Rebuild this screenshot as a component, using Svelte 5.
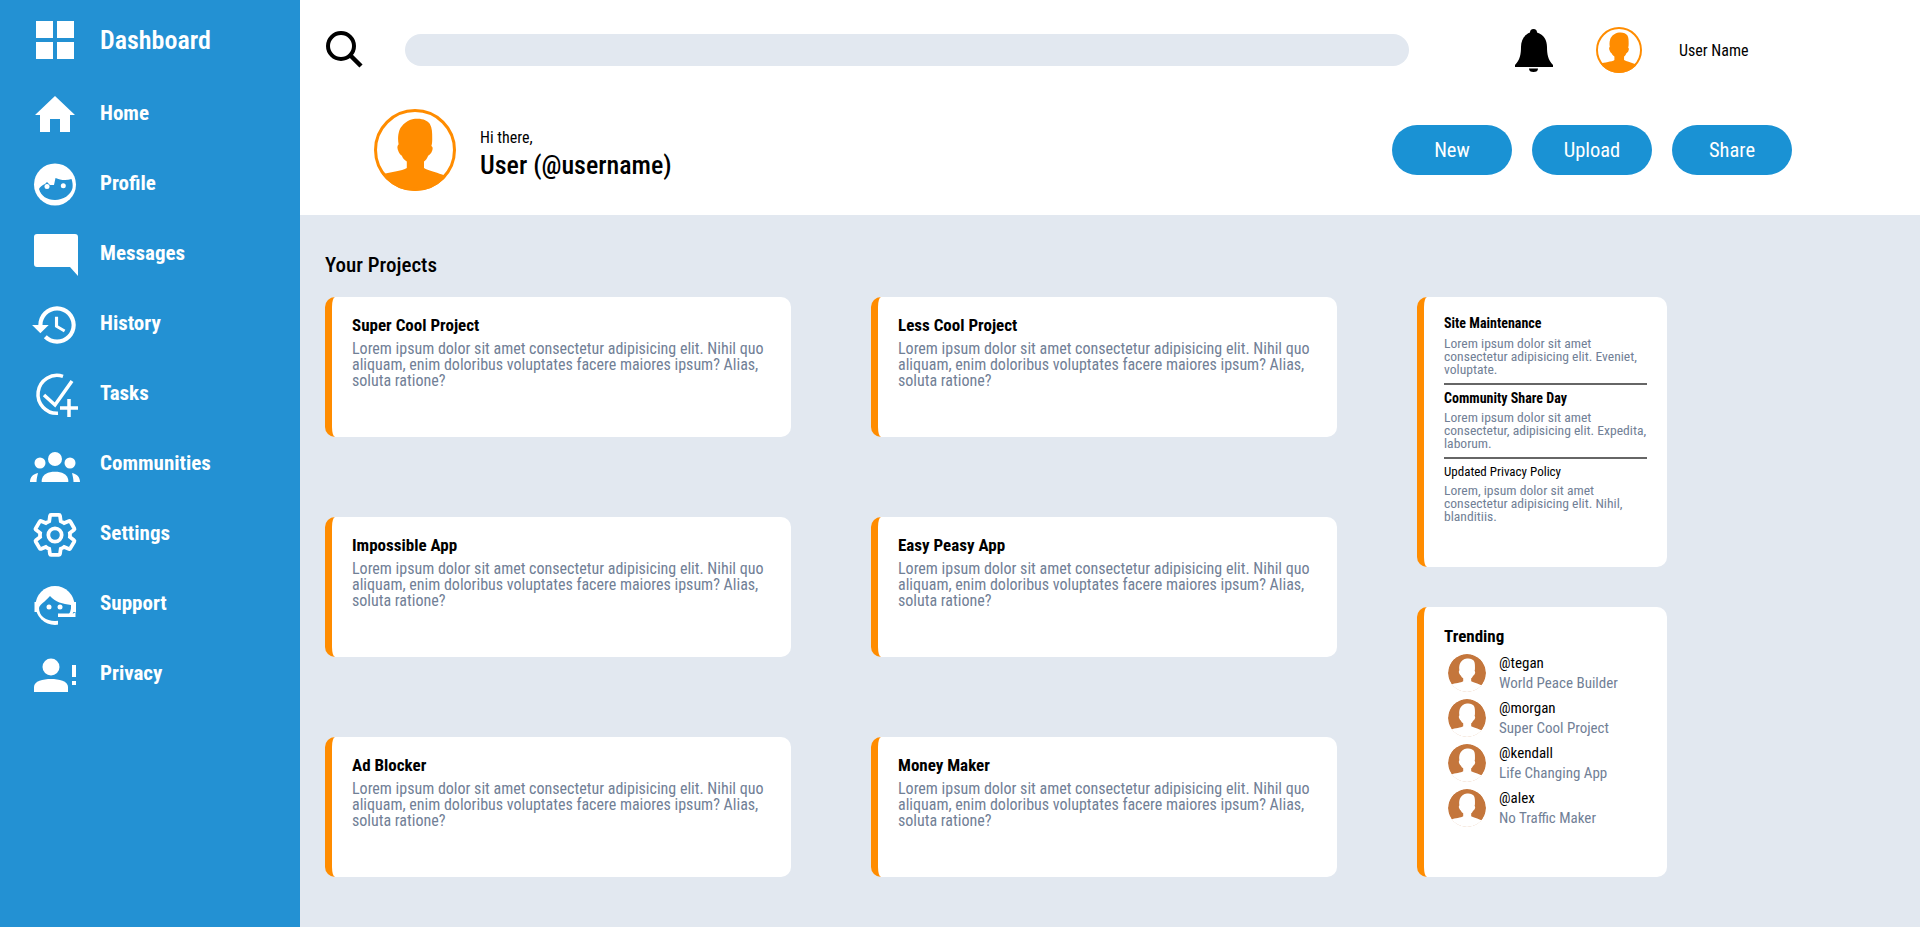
<script>
	const nav = ['Home', 'Profile', 'Messages', 'History', 'Tasks', 'Communities', 'Settings', 'Support', 'Privacy'];
	const lorem = 'Lorem ipsum dolor sit amet consectetur adipisicing elit. Nihil quo aliquam, enim doloribus voluptates facere maiores ipsum? Alias, soluta ratione?';
	const projects = ['Super Cool Project', 'Less Cool Project', 'Impossible App', 'Easy Peasy App', 'Ad Blocker', 'Money Maker'];
	const notices = [
		{ title: 'Site Maintenance', text: 'Lorem ipsum dolor sit amet consectetur adipisicing elit. Eveniet, voluptate.', bold: true },
		{ title: 'Community Share Day', text: 'Lorem ipsum dolor sit amet consectetur, adipisicing elit. Expedita, laborum.', bold: true },
		{ title: 'Updated Privacy Policy', text: 'Lorem, ipsum dolor sit amet consectetur adipisicing elit. Nihil, blanditiis.', bold: false }
	];
	const trending = [
		{ user: '@tegan', project: 'World Peace Builder' },
		{ user: '@morgan', project: 'Super Cool Project' },
		{ user: '@kendall', project: 'Life Changing App' },
		{ user: '@alex', project: 'No Traffic Maker' }
	];
	// head and shoulders, runs past the circle so the clip cuts it
	const silhouette = 'M50 12c9-1 15 2 18 6 3 5 3 11 3 18 0 3 0 6-1 9 2 1 2 4 0 8-1 2-3 3-4 4-1 3-3 6-5 7v8c5 3 14 5 22 8l12 5v25H-5V85l14-5c9-3 26-4 31-8v-8c-3-2-5-4-6-7-2-1-3-3-4-5-2-4-2-7 0-9-1-5-1-11 1-17 3-7 10-13 19-14z';
</script>

{#snippet person(id, size, ringWidth)}
	<svg class="person {id}" width={size} height={size} viewBox="0 0 100 100" aria-hidden="true">
		<defs>
			<clipPath id="clip-{id}"><circle cx="50" cy="50" r="50" /></clipPath>
		</defs>
		<g clip-path="url(#clip-{id})">
			<circle class="disc" cx="50" cy="50" r="50" />
			<path class="shape" d={silhouette} />
		</g>
		{#if ringWidth}
			<circle class="ring" cx="50" cy="50" r={50 - ringWidth / 2} stroke-width={ringWidth} />
		{/if}
	</svg>
{/snippet}

{#snippet navIcon(name)}
	<svg width="50" height="50" viewBox="0 0 50 50" fill="#fff" aria-hidden="true">
		{#if name === 'Home'}
			<path d="M25 8 45 27h-5v17H30V31H20v13H10V27H5z" />
		{:else if name === 'Profile'}
			<circle cx="25" cy="26.500" r="21" />
			<path fill="#2391d3" d="M9 31c1-2 3-4 6-5l2-2 3 3h4l1.500-7c4.500 2 10.500 3 16 1 1 3 1.500 6 1 9-1.500 7-9.500 12-17.500 12S11 38 9 31z" />
			<circle cx="33.300" cy="27.700" r="2.500" />
			<circle cx="17" cy="28.500" r="2.500" />
		{:else if name === 'Messages'}
			<path d="M7 6h38a3 3 0 0 1 3 3V48l-8-9H7a3 3 0 0 1-3-3V9a3 3 0 0 1 3-3z" />
		{:else if name === 'History'}
			<path transform="translate(0 2) scale(2.08)" d="M13 3c-4.970 0-9 4.030-9 9H1l3.890 3.890.070.140L9 12H6c0-3.870 3.130-7 7-7s7 3.130 7 7-3.130 7-7 7c-1.930 0-3.680-.790-4.940-2.060l-1.420 1.420C8.270 19.990 10.510 21 13 21c4.970 0 9-4.030 9-9s-4.030-9-9-9zm-1 5v5l4.280 2.540.720-1.210-3.500-2.080V8H12z" />
		{:else if name === 'Tasks'}
			<g fill="none" stroke="#fff" stroke-width="3.500">
				<path d="M33 8.300A19 19 0 1 0 28 45.300" />
				<path d="M14 27l11 10L42 13" />
				<path d="M39 31v18M30 40h18" />
			</g>
		{:else if name === 'Communities'}
			<g transform="translate(0 7)">
				<circle cx="25" cy="14" r="7" />
				<circle cx="10" cy="18" r="5.500" />
				<circle cx="40" cy="18" r="5.500" />
				<path d="M11.700 37v-2c1-6 6.300-8.300 13.300-8.300s12.300 2.300 13.300 8.300v2z" />
				<path d="M0 37c0-5 3-8 8-9-.700 3-1.500 6-1.500 9zM50 37c0-5-3-8-8-9 .700 3 1.500 6 1.500 9z" />
			</g>
		{:else if name === 'Settings'}
			<g transform="translate(0 2) scale(2.083)" fill="none" stroke="#fff" stroke-width="1.800">
				<path d="M19.140 12.940c.040-.300.060-.610.060-.940 0-.320-.020-.640-.070-.940l2.030-1.580c.180-.140.230-.410.120-.610l-1.920-3.320c-.120-.220-.370-.290-.590-.220l-2.390.960c-.500-.380-1.030-.700-1.620-.940l-.360-2.540c-.040-.240-.240-.410-.480-.410h-3.840c-.240 0-.430.170-.470.410l-.360 2.540c-.590.240-1.130.570-1.620.940l-2.390-.960c-.220-.080-.470 0-.590.220L2.740 8.870c-.120.210-.080.470.120.610l2.030 1.580c-.050.300-.090.630-.090.940s.020.640.070.940l-2.030 1.580c-.180.140-.230.410-.120.610l1.920 3.320c.120.220.370.290.590.220l2.390-.960c.500.380 1.030.700 1.620.940l.360 2.540c.050.240.240.410.480.410h3.840c.240 0 .440-.170.470-.410l.360-2.540c.590-.240 1.130-.560 1.620-.940l2.390.960c.220.080.470 0 .590-.220l1.920-3.320c.120-.220.070-.470-.120-.610l-2.010-1.580z" />
				<circle cx="12" cy="12" r="3.200" />
			</g>
		{:else if name === 'Support'}
			<circle cx="25" cy="27.500" r="19.500" />
			<path fill="#2391d3" d="M9 30c1-4 6-6 11-12 5 6 13 8 21 9 1 10-7 16-16 16S9 38 9 30z" />
			<path fill="#2391d3" d="M28 39h20v11H28z" />
			<path d="M4.500 24h3v10h-3zM42.500 24h3.500v10h-3.500zM28 35.500h14.500a3 3 0 0 0 3-3V39H28z" />
			<circle cx="19" cy="29" r="2.500" />
			<circle cx="30" cy="29" r="2.500" />
		{:else if name === 'Privacy'}
			<circle cx="21" cy="19" r="8.500" />
			<path d="M4 44v-5c0-6 9-8 17-8s17 2 17 8v5z" />
			<path d="M42 17h4v12h-4zM42 33h4v4h-4z" />
		{/if}
	</svg>
{/snippet}

<div class="page">
	<aside class="sidebar">
		<div class="brand">
			<svg width="50" height="50" viewBox="0 0 50 50" fill="#fff" aria-hidden="true">
				<path d="M6 6h17v17H6zM27 6h17v17H27zM6 27h17v17H6zM27 27h17v17H27z" />
			</svg>
			<span>Dashboard</span>
		</div>
		<nav>
			{#each nav as item}
				<div class="nav-item">
					{@render navIcon(item)}
					<span>{item}</span>
				</div>
			{/each}
		</nav>
	</aside>

	<div class="main">
		<header class="topbar">
			<svg class="search-icon" width="40" height="40" viewBox="0 0 40 40" fill="none" stroke="#000" aria-hidden="true">
				<circle cx="16" cy="16" r="13" stroke-width="4" />
				<path d="M25 25 36 36" stroke-width="4.500" />
			</svg>
			<div class="search"></div>
			<svg class="bell" width="40" height="44" viewBox="0 0 40 44" aria-hidden="true">
				<path d="M19.500 1a3.500 3.500 0 0 1 3.500 3.500C30 7 33 12 33 19c0 7 1 13 6 18v2H1v-2c5-5 6-11 6-18C7 12 10 7 16 4.500A3.500 3.500 0 0 1 19.500 1zM15 40.500h9a4.500 3.500 0 0 1-9 0z" />
			</svg>
			{@render person('small-avatar', 46, 4.3)}
			<span class="user-name">User Name</span>
		</header>

		<section class="hero">
			{@render person('big-avatar', 82, 3.7)}
			<div class="greeting">
				<span class="hi">Hi there,</span>
				<strong>User (@username)</strong>
			</div>
			<div class="actions">
				<button>New</button>
				<button>Upload</button>
				<button>Share</button>
			</div>
		</section>

		<section class="content">
			<div class="projects-col">
				<h2>Your Projects</h2>
				<div class="projects">
					{#each projects as title}
						<article class="card project">
							<h3>{title}</h3>
							<p>{lorem}</p>
						</article>
					{/each}
				</div>
			</div>
			<div class="side">
				<div class="card notices">
					{#each notices as n, i}
						<div class="notice" class:ruled={i < notices.length - 1}>
							<h4 class:bold={n.bold}>{n.title}</h4>
							<p>{n.text}</p>
						</div>
					{/each}
				</div>
				<div class="card trending">
					<h3>Trending</h3>
					{#each trending as t, i}
						<div class="trend-row">
							{@render person(`trend-${i}`, 38, 0)}
							<div class="trend-text">
								<span>{t.user}</span>
								<small>{t.project}</small>
							</div>
						</div>
					{/each}
				</div>
			</div>
		</section>
	</div>
</div>

<style>
	:global(body) {
		margin: 0;
		background: #e2e8f0;
		font-family: Roboto, 'Liberation Sans', sans-serif;
		font-stretch: 75%;
		color: #000;
	}

	.page {
		display: flex;
		height: 927px;
		overflow: hidden;
	}

	.sidebar {
		width: 300px;
		flex: none;
		background: #2391d3;
		color: #fff;
		font-weight: 700;
	}

	.brand {
		display: flex;
		align-items: center;
		height: 80px;
		padding-left: 30px;
		gap: 20px;
		font-size: 26px;
		font-weight: 600;
	}

	nav {
		display: flex;
		flex-direction: column;
		margin-top: -2px;
	}

	.nav-item {
		display: flex;
		align-items: center;
		height: 70px;
		padding-left: 30px;
		gap: 20px;
		font-size: 21px;
	}

	.nav-item span {
		margin-top: -1px;
	}

	.main {
		flex: 1;
		display: flex;
		flex-direction: column;
		min-width: 0;
	}

	.topbar {
		display: flex;
		align-items: center;
		height: 100px;
		background: #fff;
		padding-left: 25px;
	}

	.search-icon {
		flex: none;
	}

	.search {
		width: 1004px;
		height: 32px;
		margin-left: 40px;
		border-radius: 16px;
		background: #e2e8f0;
	}

	.bell {
		margin-left: 105px;
		flex: none;
	}

	.user-name {
		margin-left: 37px;
		font-size: 16px;
	}

	.topbar :global(.small-avatar) {
		margin-left: 42px;
		flex: none;
	}

	.hero {
		display: flex;
		align-items: center;
		box-sizing: border-box;
		height: 115px;
		padding: 0 0 15px 74px;
		background: #fff;
	}

	.hero :global(.big-avatar) {
		flex: none;
	}

	.greeting {
		display: flex;
		flex-direction: column;
		margin: 10px 0 0 24px;
	}

	.hi {
		font-size: 16px;
		line-height: 20px;
	}

	.greeting strong {
		font-size: 26px;
		line-height: 34px;
		font-weight: 500;
	}

	.actions {
		display: flex;
		gap: 20px;
		margin-left: auto;
		margin-right: 128px;
	}

	button {
		width: 120px;
		height: 50px;
		border: 0;
		border-radius: 25px;
		background: #1a92d4;
		color: #fff;
		font: inherit;
		font-size: 20.5px;
	}

	.content {
		flex: 1;
		display: flex;
		padding: 38px 0 0 25px;
	}

	.projects-col {
		width: 1092px;
	}

	h2 {
		margin: 0 0 19px;
		font-size: 21px;
		line-height: 25px;
		font-weight: 500;
	}

	.projects {
		display: grid;
		grid-template-columns: 466px 466px;
		grid-auto-rows: 140px;
		gap: 80px;
	}

	.card {
		box-sizing: border-box;
		background: #fff;
		border-left: 7px solid #ff8c00;
		border-radius: 10px;
	}

	.project {
		padding: 18px 20px;
	}

	.project h3 {
		margin: 0 0 5px;
		font-size: 17px;
		line-height: 21px;
		font-weight: 700;
	}

	.project p {
		margin: 0;
		font-size: 16px;
		line-height: 16.2px;
		color: #718096;
	}

	.side {
		display: flex;
		flex-direction: column;
		gap: 40px;
		padding-top: 44px;
		width: 250px;
	}

	.notices {
		height: 270px;
		padding: 18px 20px;
	}

	.notice h4 {
		margin: 0 0 3.5px;
		font-size: 13px;
		line-height: 16px;
		font-weight: 400;
	}

	.notice h4.bold {
		margin-bottom: 5.5px;
		font-size: 14px;
		font-weight: 700;
	}

	.notice p {
		margin: 0;
		font-size: 13.6px;
		line-height: 13px;
		color: #718096;
	}

	.notice.ruled {
		border-bottom: 2px solid #666;
		padding-bottom: 7px;
		margin-bottom: 5px;
	}

	.trending {
		height: 270px;
		padding: 18px 20px;
	}

	.trending h3 {
		margin: 0 0 7px;
		font-size: 17px;
		line-height: 22px;
		font-weight: 700;
	}

	.trend-row {
		display: flex;
		align-items: center;
		height: 38px;
		margin-bottom: 7px;
		margin-left: 4px;
		gap: 13px;
	}

	.trend-row :global(.person) {
		flex: none;
	}

	.trend-text {
		display: flex;
		flex-direction: column;
		font-size: 15px;
		line-height: 20px;
	}

	.trend-text small {
		font-size: 15px;
		color: #718096;
	}

	.topbar :global(.disc), .hero :global(.disc) {
		fill: #fff;
	}

	.topbar :global(.shape), .hero :global(.shape) {
		fill: #ff8c00;
	}

	:global(.ring) {
		fill: none;
		stroke: #ff8c00;
	}

	.trend-row :global(.disc) {
		fill: #c4763c;
	}

	.trend-row :global(.shape) {
		fill: #fff;
	}
</style>
